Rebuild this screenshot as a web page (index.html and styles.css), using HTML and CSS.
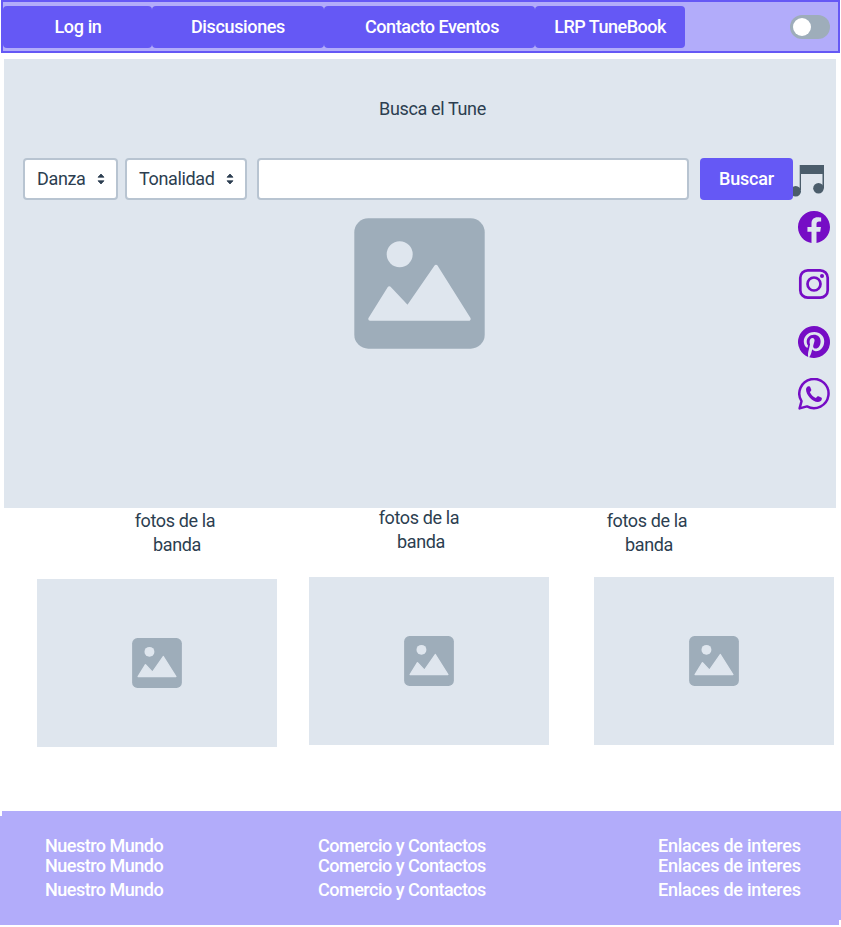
FILE: index.html
```html
<!DOCTYPE html>
<html lang="es">
<head>
<meta charset="utf-8">
<title>LRP TuneBook</title>
<link rel="stylesheet" href="styles.css">
</head>
<body>
<svg class="defs" aria-hidden="true">
  <symbol id="picture" viewBox="0 0 131 131">
    <rect x=".3" y=".3" width="130.400" height="130.400" rx="14" fill="#9eadba"/>
    <circle cx="45.700" cy="36.300" r="13" fill="#dfe6ee"/>
    <path d="M16 101 35.300 70 53.700 89.500 82 48.500 115 101Z" fill="#dfe6ee" stroke="#dfe6ee" stroke-width="3.500" stroke-linejoin="round"/>
  </symbol>
</svg>
<header class="topbar">
  <nav class="nav">
    <a class="nav-item login"><span>Log in</span></a>
    <a class="nav-item talks"><span>Discusiones</span></a>
    <a class="nav-item events"><span>Contacto Eventos</span></a>
    <a class="nav-item book"><span>LRP TuneBook</span></a>
  </nav>
  <span class="toggle"></span>
</header>
<main>
  <section class="hero">
    <h1 class="title">Busca el Tune</h1>
    <div class="search">
      <div class="select dance"><span>Danza</span><svg width="8" height="12" viewBox="0 0 8 12"><path d="M1 4.200 4 1l3 3.200ZM1 7.800 4 11l3-3.200Z"/></svg></div>
      <div class="select key"><span>Tonalidad</span><svg width="8" height="12" viewBox="0 0 8 12"><path d="M1 4.200 4 1l3 3.200ZM1 7.800 4 11l3-3.200Z"/></svg></div>
      <input class="query" type="text" aria-label="Tune">
      <button class="submit"><span>Buscar</span></button>
      <svg class="music" width="34" height="34" viewBox="0 0 34 34"><path d="M8.700 2H33v23h-1.500V11H10v16H8.700Z"/><circle cx="4.700" cy="28.300" r="5.300"/><circle cx="27.500" cy="25.300" r="5.300"/></svg>
    </div>
    <div class="stage">
      <svg class="cover"><use href="#picture"/></svg>
      <div class="social">
        <svg viewBox="0 0 16 16"><path d="M16 8.049c0-4.446-3.582-8.050-8-8.050C3.580 0-.002 3.603-.002 8.050c0 4.017 2.926 7.347 6.750 7.951v-5.625h-2.030V8.050H6.750V6.275c0-2.017 1.195-3.131 3.022-3.131.876 0 1.791.157 1.791.157v1.980h-1.009c-.993 0-1.303.621-1.303 1.258v1.510h2.218l-.354 2.326H9.250V16c3.824-.604 6.750-3.934 6.750-7.951z"/></svg>
        <svg class="insta" viewBox="0 0 32 32"><rect x="2.300" y="2.300" width="27.400" height="27.400" rx="7.500" class="line"/><circle cx="16" cy="16" r="6.500" class="line"/><circle cx="24" cy="8" r="2"/></svg>
        <svg class="pin" viewBox="0 0 16 16"><path d="M8 0a8 8 0 0 0-2.915 15.452c-.07-.633-.134-1.606.027-2.297.146-.625.938-3.977.938-3.977s-.239-.479-.239-1.187c0-1.113.645-1.943 1.448-1.943.682 0 1.012.512 1.012 1.127 0 .686-.437 1.712-.663 2.663-.188.796.4 1.446 1.185 1.446 1.422 0 2.515-1.500 2.515-3.664 0-1.915-1.377-3.254-3.342-3.254-2.276 0-3.612 1.707-3.612 3.471 0 .688.265 1.425.595 1.826a.24.24 0 0 1 .056.23c-.061.252-.196.796-.222.907-.035.146-.116.177-.268.107-1-.465-1.624-1.926-1.624-3.100 0-2.523 1.834-4.840 5.286-4.840 2.775 0 4.932 1.977 4.932 4.620 0 2.757-1.739 4.976-4.151 4.976-.811 0-1.573-.421-1.834-.919l-.498 1.902c-.181.695-.669 1.566-.995 2.097A8 8 0 1 0 8 0z"/></svg>
        <svg class="wa" viewBox="0 0 32 32"><path class="line thin" d="M1.600 30.400 3.500 23.200A14.600 14.600 0 1 1 9 28.400Z"/><path d="M8 11.500C8 9.600 9.400 8.300 10.500 8.300c1 0 1.500.2 1.900 1.200l.8 2.100c.3.900-.1 1.400-1.300 2.700 1.300 2.600 3.200 4.500 6 5.700 1.300-1.600 1.700-2.100 2.600-1.700l2.600 1.300c.8.400.9.800.7 1.600-.4 1.800-2 2.800-4 2.800C14.500 24 8 17 8 11.500Z"/></svg>
      </div>
    </div>
  </section>
  <section class="gallery">
    <figure class="photo one"><figcaption>fotos de la&nbsp;<br>banda</figcaption><div class="thumb"><svg><use href="#picture"/></svg></div></figure>
    <figure class="photo two"><figcaption>fotos de la&nbsp;<br>banda</figcaption><div class="thumb"><svg><use href="#picture"/></svg></div></figure>
    <figure class="photo three"><figcaption>fotos de la&nbsp;<br>banda</figcaption><div class="thumb"><svg><use href="#picture"/></svg></div></figure>
  </section>
</main>
<footer class="footer">
  <div class="links world"><a>Nuestro Mundo</a><a>Nuestro Mundo</a><a>Nuestro Mundo</a></div>
  <div class="links trade"><a>Comercio y Contactos</a><a>Comercio y Contactos</a><a>Comercio y Contactos</a></div>
  <div class="links more"><a>Enlaces de interes</a><a>Enlaces de interes</a><a>Enlaces de interes</a></div>
</footer>
</body>
</html>
```
FILE: styles.css
```css
* { box-sizing: border-box; }
body { margin: 0; width: 841px; height: 927px; overflow: hidden; background: #fff; color: #2c3e50; font: 400 18px/24px Roboto, sans-serif; letter-spacing: -.36px; }
.defs { display: none; }
svg { display: block; flex: none; }
span, a, h1, figcaption { white-space: nowrap; }

.topbar { display: flex; justify-content: space-between; align-items: flex-start; width: 839px; height: 53px; margin-left: 1px; padding: 4px 8px 0 0; border: 2px solid #6558f5; background: #b2acfa; }
.nav { display: flex; }
.nav-item { display: flex; align-items: center; justify-content: center; height: 42px; border-radius: 4px; background: #6558f5; color: #fff; font-weight: 500; }
.login { width: 149px; padding-left: 1px; }
.talks { width: 172px; }
.events { width: 211px; padding-left: 5px; letter-spacing: -.46px; }
.book { width: 150px; letter-spacing: -.5px; }
.toggle { width: 40px; height: 24px; margin-top: 8.500px; padding: 3px; border-radius: 12px; background: #9eadba; }
.toggle::before { content: ""; display: block; width: 18px; height: 18px; border-radius: 50%; background: #fff; }

.hero { width: 832px; height: 449px; margin: 6px 0 0 4px; padding-top: 38px; background: #dfe6ee; }
.title { margin: 0 0 37px; padding-left: 25px; font-size: 18px; font-weight: 400; text-align: center; }
.search { display: flex; height: 42px; padding-left: 19px; }
.select { display: flex; align-items: center; justify-content: space-between; padding: 0 11px 0 12px; border: 2px solid #b8c4d1; border-radius: 4px; background: #fff; }
.select svg { fill: #2c3e50; stroke: #2c3e50; stroke-width: .8; stroke-linejoin: round; }
.dance { width: 95px; margin-right: 7px; }
.key { width: 122px; margin-right: 10px; }
.query { width: 432px; margin-right: 11px; border: 2px solid #b8c4d1; border-radius: 4px; background: #fff; }
.submit { position: relative; z-index: 1; width: 93px; padding: 0; border: 0; border-radius: 4px; background: #6558f5; color: #fff; font: 500 18px/24px Roboto, sans-serif; letter-spacing: -.2px; }
.music { margin: 5px 0 0 -2px; fill: #4b5d6b; }
.stage { display: flex; justify-content: space-between; padding: 11px 6px 0 350px; }
.cover { width: 131px; height: 131px; margin-top: 7px; }
.social { display: flex; flex-direction: column; fill: #760dc5; }
.social svg { width: 32px; height: 32px; }
.social .insta { margin-top: 25px; }
.social .pin { margin-top: 26px; }
.social .wa { margin-top: 20px; }
.line { fill: none; stroke: #760dc5; stroke-width: 2.700; }
.thin { stroke-width: 2.500; stroke-linejoin: round; }

.gallery { display: flex; height: 303px; padding-left: 37px; }
.photo { width: 240px; margin: 0; }
.photo figcaption { width: 100px; text-align: center; }
.thumb { display: flex; align-items: center; justify-content: center; height: 168px; background: #dfe6ee; }
.thumb svg { width: 50px; height: 50px; }
.one { padding-top: 1px; }
.one figcaption { margin: 0 0 22px 90px; }
.two { margin: -2px 32px 0; }
.two figcaption { margin: 0 0 23px 62px; }
.three { margin-left: 13px; padding-top: 1px; }
.three figcaption { margin: 0 0 20px 5px; }

.footer { display: flex; height: 114px; padding: 25px 0 0 45px; background: #b2acfa; clip-path: polygon(2px 0, 100% 0, 100% 109px, 839px 109px, 839px 100%, 0 100%, 0 5px, 2px 5px); color: #fff; font-weight: 500; line-height: 20px; letter-spacing: -.5px; }
.links { display: flex; flex-direction: column; }
.links a:last-child { margin-top: 4px; }
.world { width: 273px; }
.trade { width: 340px; }
.more { letter-spacing: -.23px; }
```
